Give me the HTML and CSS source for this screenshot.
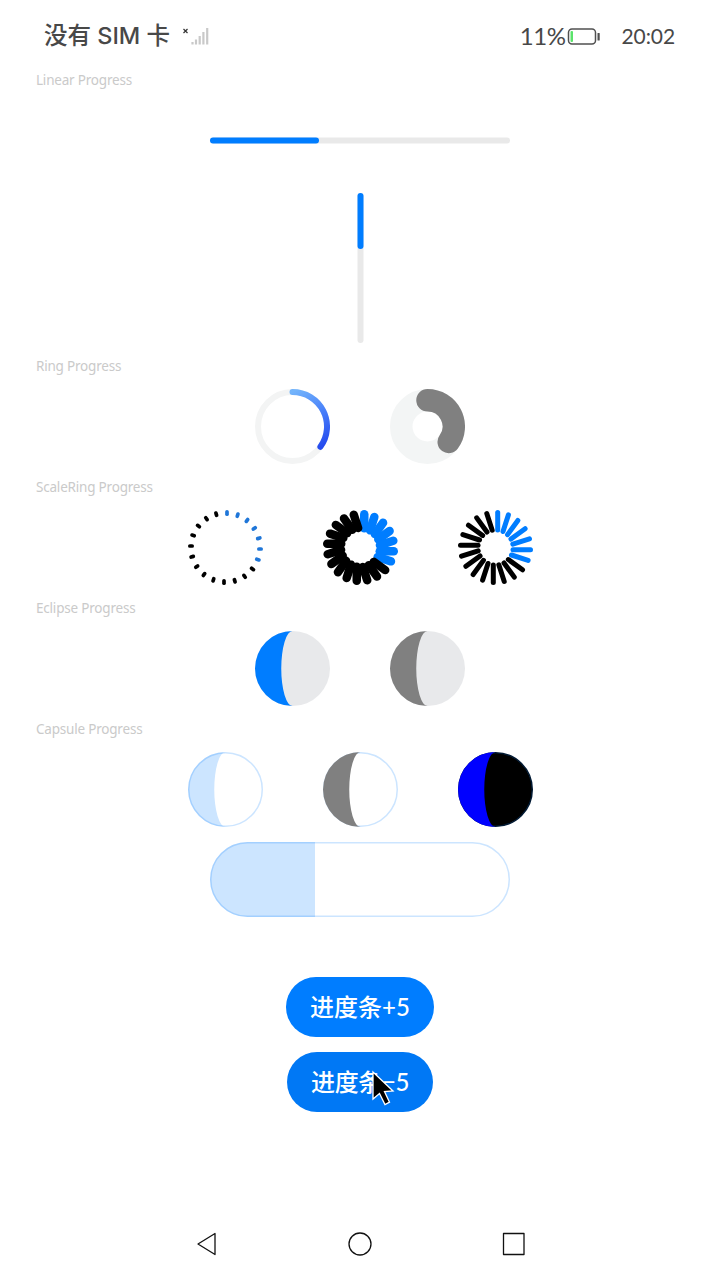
FILE: index.html
```html
<!DOCTYPE html>
<html lang="zh-CN">
<head>
<meta charset="utf-8">
<title>Progress</title>
<link rel="stylesheet" href="styles.css">
</head>
<body>
<div class="screen">
  <header class="status">
    <span class="carrier">没有 SIM 卡</span>
    <svg class="signal" width="28" height="20" viewBox="0 0 28 20">
      <path d="M1.500 2l4 4M5.500 2l-4 4" stroke="#333" stroke-width="1.200"/>
      <path d="M10.500 15v2.500M14 12.500v5M17.700 9v8.500M21.400 5v12.500M25.200 1v16.500" stroke="#c9c9c9" stroke-width="2.200"/>
    </svg>
    <span class="percent">11%</span>
    <svg class="battery" width="34" height="18" viewBox="0 0 34 18">
      <rect x="1.500" y="1" width="27" height="15" rx="3.500" fill="none" stroke="#505050" stroke-width="1.500"/>
      <rect x="3.500" y="3" width="2.500" height="11" rx="1" fill="#5be36b"/>
      <rect x="30.500" y="5" width="2.200" height="7.500" rx=".5" fill="#505050"/>
    </svg>
    <span class="clock">20:02</span>
  </header>

  <main class="content">
    <h2 class="label">Linear Progress</h2>
    <div class="row"><div class="bar bar-horizontal"><div class="bar-value"></div></div></div>
    <div class="bar bar-vertical"><div class="bar-value"></div></div>

    <h2 class="label">Ring Progress</h2>
    <div class="row">
      <svg class="dial" viewBox="0 0 75 75">
        <defs><linearGradient id="ring" gradientUnits="userSpaceOnUse" x1="37" y1="3" x2="66" y2="58"><stop offset="0" stop-color="#73b4fb"/><stop offset=".5" stop-color="#4880fa"/><stop offset="1" stop-color="#254bee"/></linearGradient></defs>
        <circle cx="37.500" cy="37.500" r="34.500" fill="none" stroke="#f3f4f4" stroke-width="6"/>
        <path d="M37.500 3A34.500 34.500 0 0 1 65.400 57.800" fill="none" stroke="url(#ring)" stroke-width="6" stroke-linecap="round"/>
      </svg>
      <svg class="dial" viewBox="0 0 75 75">
        <circle cx="37.500" cy="37.500" r="26.250" fill="none" stroke="#f3f5f5" stroke-width="22.500"/>
        <path d="M37.500 11.250A26.250 26.250 0 0 1 58.740 52.930" fill="none" stroke="#808080" stroke-width="22.500" stroke-linecap="round"/>
      </svg>
    </div>

    <h2 class="label">ScaleRing Progress</h2>
    <div class="row">
      <svg class="dial" viewBox="0 0 75 75" data-center="1.500" data-width="3.700" data-length="6" data-color="#1f76d8"></svg>
      <svg class="dial" viewBox="0 0 75 75" data-center="3.750" data-width="8.500" data-length="22.500" data-color="#007dff"></svg>
      <svg class="dial" viewBox="0 0 75 75" data-center="2.200" data-width="5" data-length="22.500" data-color="#007dff"></svg>
    </div>

    <h2 class="label">Eclipse Progress</h2>
    <div class="row">
      <svg class="dial" viewBox="0 0 75 75"><circle cx="37.500" cy="37.500" r="37.500" fill="#e8e9eb"/><path d="M37.500 0A37.500 37.500 0 0 0 37.500 75A11.250 37.500 0 0 1 37.500 0" fill="#007dff"/></svg>
      <svg class="dial" viewBox="0 0 75 75"><circle cx="37.500" cy="37.500" r="37.500" fill="#e8e9eb"/><path d="M37.500 0A37.500 37.500 0 0 0 37.500 75A11.250 37.500 0 0 1 37.500 0" fill="#808080"/></svg>
    </div>

    <h2 class="label">Capsule Progress</h2>
    <div class="row">
      <svg class="dial" viewBox="0 0 75 75"><path d="M37.500 0A37.500 37.500 0 0 0 37.500 75A11.250 37.500 0 0 1 37.500 0" fill="#cce5ff"/><circle cx="37.500" cy="37.500" r="36.750" fill="none" stroke="#007dff" stroke-opacity=".2" stroke-width="1.500"/></svg>
      <svg class="dial" viewBox="0 0 75 75"><circle cx="37.500" cy="37.500" r="36.750" fill="none" stroke="#cce5ff" stroke-width="1.500"/><path d="M37.500 0A37.500 37.500 0 0 0 37.500 75A11.250 37.500 0 0 1 37.500 0" fill="#808080"/></svg>
      <svg class="dial" viewBox="0 0 75 75"><circle cx="37.500" cy="37.500" r="36.750" fill="#000" stroke="#001933" stroke-width="1.500"/><path d="M37.500 0A37.500 37.500 0 0 0 37.500 75A11.250 37.500 0 0 1 37.500 0" fill="#00f"/></svg>
    </div>
    <svg class="capsule" viewBox="0 0 300 75">
      <path d="M105 0H37.500A37.500 37.500 0 0 0 37.500 75H105Z" fill="#cce5ff"/>
      <rect x=".75" y=".75" width="298.500" height="73.500" rx="36.750" fill="none" stroke="#007dff" stroke-opacity=".2" stroke-width="1.500"/>
    </svg>

    <div class="actions">
      <button class="button plus">进度条+5</button>
      <button class="button minus">进度条−5</button>
      <svg class="cursor" width="26" height="38" viewBox="0 0 26 38"><path d="M2 2V29L8.500 23.500L14 34.500L18.500 32.200L13.500 21.500L22 21Z" fill="#000" stroke="#fff" stroke-width="1.300"/></svg>
    </div>
  </main>

  <nav class="nav">
    <svg width="26" height="26" viewBox="0 0 26 26"><path d="M21 2.500V23.500L4 13Z"/></svg>
    <svg width="26" height="26" viewBox="0 0 26 26"><circle cx="13" cy="13" r="11"/></svg>
    <svg width="26" height="26" viewBox="0 0 26 26"><rect x="2.500" y="2.500" width="20.500" height="21"/></svg>
  </nav>
</div>
<script src="dials.js"></script>
</body>
</html>
```
FILE: styles.css
```css
body { margin: 0; background: #fff; }
.screen {
  width: 720px; height: 1280px; overflow: hidden;
  display: flex; flex-direction: column;
  font-family: "Noto Sans", "Noto Sans CJK SC", sans-serif;
}
.status {
  height: 72px; box-sizing: border-box; padding: 0 45px 0 44px;
  display: flex; align-items: center; color: #484848; line-height: 70px; white-space: nowrap;
}
.carrier { width: 138px; font-family: Inter, "Noto Sans CJK SC", sans-serif; font-size: 23.500px; font-weight: 500; line-height: 72px; }
.signal { margin-top: 2px; }
.percent { margin-left: auto; font-family: Lato, sans-serif; font-size: 24px; letter-spacing: -.4px; }
.battery { margin: 2px 21px 0 1px; }
.clock { font-family: Lato, sans-serif; font-size: 21px; letter-spacing: -.1px; }
.content { height: 1136px; display: flex; flex-direction: column; align-items: center; gap: 15px; }
.label { align-self: flex-start; margin: 0 0 0 36px; height: 16px; font-size: 13.500px; font-weight: 400; line-height: 16px; letter-spacing: -.2px; color: #cacaca; white-space: nowrap; }
.row { display: flex; align-items: center; justify-content: center; gap: 60px; height: 75px; }
.dial { display: block; width: 75px; height: 75px; }
.bar { width: 300px; height: 6px; border-radius: 3px; background: #e9e9e9; }
.bar-value { width: 109px; height: 6px; border-radius: 3px; background: #007dff; }
.bar-horizontal { transform: translateY(-.5px); }
.bar-vertical { width: 6px; height: 150px; transform: translateX(.5px); }
.bar-vertical .bar-value { width: 6px; height: 56px; }
.capsule { display: block; width: 300px; height: 75px; }
.actions { position: relative; margin-top: 45px; display: flex; flex-direction: column; align-items: center; gap: 15px; }
.button {
  height: 60px; padding: 0 0 4px; border: 0; border-radius: 30px; background: #007dff; color: #fff;
  font-family: Lato, "Noto Sans CJK SC", sans-serif; font-size: 24px; font-weight: 500; white-space: nowrap;
}
.plus { width: 148px; }
.minus { width: 146px; background: #0078f5; letter-spacing: -.4px; }
.cursor { position: absolute; left: 85px; top: 93px; }
.nav { height: 72px; display: flex; align-items: center; justify-content: center; gap: 127.500px; }
.nav svg { fill: none; stroke: #111; stroke-width: 1.300; stroke-linejoin: round; }
```
FILE: dials.js
```js
// Draws twenty ticks round each scale dial; the first seven show progress.
document.querySelectorAll("svg[data-width]").forEach(function (dial) {
  var w = Number(dial.dataset.width);
  var len = Number(dial.dataset.length);
  var left = 37.5 + Number(dial.dataset.center) - w / 2;
  for (var i = 0; i < 20; i++) {
    var tick = document.createElementNS("http://www.w3.org/2000/svg", "rect");
    tick.setAttribute("x", left);
    tick.setAttribute("y", 0);
    tick.setAttribute("width", w);
    tick.setAttribute("height", len);
    tick.setAttribute("rx", w / 2);
    tick.setAttribute("fill", i < 7 ? dial.dataset.color : "#000");
    tick.setAttribute("transform", "rotate(" + i * 18 + " 37.5 37.5)");
    dial.appendChild(tick);
  }
});
```
